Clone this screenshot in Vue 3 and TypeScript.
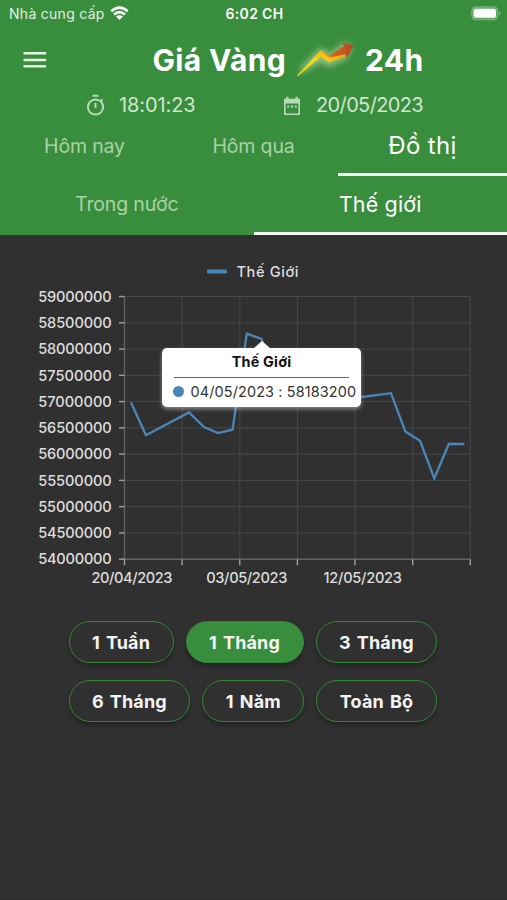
<script setup lang="ts">
import { ref } from 'vue'

interface Point { x: number; y: number }

const dayTab = ref(2)
const marketTab = ref(1)
const range = ref('1 Tháng')

const dayTabs = ['Hôm nay', 'Hôm qua', 'Đồ thị']
const marketTabs = ['Trong nước', 'Thế giới']
const rangeRows: string[][] = [
  ['1 Tuần', '1 Tháng', '3 Tháng'],
  ['6 Tháng', '1 Năm', 'Toàn Bộ'],
]

const left = 124.5
const right = 470.3
const top = 61.5
const bottom = 324.2
const yTicks = Array.from({ length: 11 }, (_, i) => ({
  label: String(59000000 - i * 500000),
  y: top + (i * (bottom - top)) / 10,
}))
const xTicks = Array.from({ length: 7 }, (_, i) => left + (i * (right - left)) / 6)
const xLabels = [
  { text: '20/04/2023', x: 91.5, w: 81 },
  { text: '03/05/2023', x: 206.3, w: 81 },
  { text: '12/05/2023', x: 323.5, w: 78.5 },
]

const points: Point[] = [
  { x: 131, y: 167.5 }, { x: 146, y: 200.2 }, { x: 189, y: 177.5 }, { x: 204, y: 192 },
  { x: 218, y: 198 }, { x: 232.5, y: 194.7 }, { x: 246.8, y: 98.6 }, { x: 261.5, y: 104 },
  { x: 275, y: 145 }, { x: 347, y: 164 }, { x: 391, y: 158.2 }, { x: 405.3, y: 196.5 },
  { x: 420, y: 205.8 }, { x: 434.3, y: 243.5 }, { x: 448.8, y: 209 }, { x: 464.3, y: 209 },
]
const linePoints = points.map((p) => `${p.x},${p.y}`).join(' ')
</script>

<template>
  <div class="screen">
    <header class="top">
      <div class="status">
        <div class="carrier">
          <span>Nhà cung cấp</span>
          <svg class="wifi" width="19" height="15" viewBox="0 0 19 15">
            <path d="M1.3 5.3Q9.5-1.9 17.7 5.3" />
            <path d="M4 8.4Q9.5 3.7 15 8.4" />
            <path class="solid" d="M9.5 14 6 10.5Q9.5 7.8 13 10.5Z" />
          </svg>
        </div>
        <span class="clock">6:02 CH</span>
        <div class="battery-wrap">
          <svg width="31" height="15" viewBox="0 0 31 15">
            <rect x=".8" y=".8" width="26" height="13" rx="4" fill="#64a666" stroke="#7db87f" />
            <rect x="2.6" y="2.8" width="22.4" height="9" rx="2" fill="#fff" />
            <path d="M28.3 5q2.3 2.4 0 4.8z" fill="#8bc08d" />
          </svg>
        </div>
      </div>

      <div class="title-row">
        <svg class="menu" width="24" height="18" viewBox="0 0 24 18">
          <path d="M.5 2.3h22.6M.5 8.9h22.6M.5 15.2h22.6" />
        </svg>
        <h1>Giá Vàng</h1>
        <svg class="arrow" width="68" height="48" viewBox="0 0 68 48">
          <defs>
            <linearGradient id="gold" x1="0" x2="1" y1="1" y2="0">
              <stop offset="0" stop-color="#d9dc16" />
              <stop offset=".5" stop-color="#fbd80c" />
              <stop offset="1" stop-color="#e99a16" />
            </linearGradient>
            <linearGradient id="rust" x1="0" x2="1">
              <stop offset="0" stop-color="#e0901b" />
              <stop offset=".45" stop-color="#c9641f" />
              <stop offset="1" stop-color="#b8481f" />
            </linearGradient>
            <filter id="glow" x="-30%" y="-30%" width="160%" height="160%">
              <feGaussianBlur stdDeviation="3" />
            </filter>
          </defs>
          <path d="M10 36 30 16 40 22 54 10 58 14 53 22 38 29 29 24Z" fill="#d9e8bf" stroke="#d9e8bf" stroke-width="5" opacity=".58" filter="url(#glow)" />
          <path d="M38 20.5 53 11.2 51.5 7.6 62.5 10.2 56.2 23 54.4 19.3 39.5 24.3 29.5 18 30 15.5Z" fill="url(#rust)" />
          <path d="M6 40.5 29.5 15.5 39 22.5 54 19.2 54 21.8 38 27.5 30 21.5 7 41.3Z" fill="url(#gold)" />
        </svg>
        <h1 class="hours">24h</h1>
      </div>

      <div class="info-row">
        <svg class="timer" width="20" height="22" viewBox="0 0 20 22">
          <circle cx="9.5" cy="13" r="7.6" />
          <path d="M6.5 1.8h6M9.5 9v5M14.8 7.2l1.8-1.8" />
        </svg>
        <span class="time">18:01:23</span>
        <svg class="calendar" width="18" height="20" viewBox="0 0 18 20">
          <path d="M1.8 3.6h14.4v14.6H1.8z" />
          <path class="fill" d="M1 3h16v4.6H1zM3.3.8h2.2v3H3.3zM12.5.8h2.2v3h-2.2z" />
          <path class="fill" d="M4.2 9.4h2v2h-2zM8 9.4h2v2H8zM11.8 9.4h2v2h-2z" />
        </svg>
        <span class="date">20/05/2023</span>
      </div>

      <nav class="tabs days">
        <button v-for="(t, i) in dayTabs" :key="t" :class="{ active: dayTab === i }" @click="dayTab = i">{{ t }}</button>
      </nav>
      <nav class="tabs markets">
        <button v-for="(t, i) in marketTabs" :key="t" :class="{ active: marketTab === i }" @click="marketTab = i">{{ t }}</button>
      </nav>
    </header>

    <main>
      <section class="chart">
        <svg width="507" height="365" viewBox="0 0 507 365">
          <rect x="207" y="34.6" width="20" height="4" rx="1" fill="#4a86b8" />
          <text class="label" x="236.5" y="41.8" textLength="62">Thế Giới</text>

          <g class="grid">
            <line v-for="t in yTicks" :key="t.y" :x1="left" :x2="right" :y1="t.y" :y2="t.y" />
            <line v-for="x in xTicks" :key="x" :x1="x" :x2="x" :y1="top" :y2="bottom" />
          </g>
          <g class="axis">
            <line :x1="left" :x2="left" :y1="top" :y2="bottom" />
            <line :x1="left" :x2="right" :y1="bottom" :y2="bottom" />
          </g>
          <g class="ticks">
            <line v-for="t in yTicks" :key="t.y" :x1="119" :x2="left" :y1="t.y" :y2="t.y" />
            <line v-for="x in xTicks" :key="x" :x1="x" :x2="x" :y1="bottom" :y2="bottom + 6" />
          </g>
          <text v-for="t in yTicks" :key="t.label" class="label" x="38.2" :y="t.y + 5.2" textLength="73.5">{{ t.label }}</text>
          <text v-for="l in xLabels" :key="l.text" class="label" :x="l.x" y="347.6" :textLength="l.w">{{ l.text }}</text>
          <polyline class="series" :points="linePoints" />
        </svg>

        <div class="tooltip">
          <strong>Thế Giới</strong>
          <div class="entry">
            <i></i>
            <span>04/05/2023 : 58183200</span>
          </div>
        </div>
      </section>

      <section class="ranges">
        <div v-for="(row, r) in rangeRows" :key="r" class="range-row">
          <button v-for="b in row" :key="b" :class="{ on: range === b }" @click="range = b">{{ b }}</button>
        </div>
      </section>
    </main>
  </div>
</template>

<style>
body {
  background: #303030;
}
</style>

<style scoped>
.screen {
  width: 507px;
  height: 900px;
  overflow: hidden;
  box-sizing: border-box;
  background: #303030;
  border-bottom: 1px solid #2d282c;
  color: #fff;
  font-family: Inter, Roboto, sans-serif;
}
button {
  font-family: inherit;
  color: inherit;
  background: none;
  border: 0;
  padding: 0;
  white-space: nowrap;
}
.top {
  height: 234.5px;
  background: #398e3d;
}
.status {
  height: 28px;
  display: grid;
  grid-template-columns: 1fr auto 1fr;
  align-items: center;
  padding: 0 7px 0 9px;
  font-size: 14px;
}
.status > * {
  min-width: 0;
}
.carrier {
  display: flex;
  align-items: center;
  gap: 5px;
  color: #e2f0e2;
  letter-spacing: 0.28px;
  margin-top: -1px;
}
.wifi {
  fill: none;
  stroke: #fff;
  stroke-width: 2.6;
  margin-top: -1px;
}
.wifi .solid {
  fill: #fff;
  stroke: none;
}
.clock {
  font-weight: 600;
  letter-spacing: 0.35px;
  margin-top: -1px;
}
.battery-wrap {
  display: flex;
  justify-content: flex-end;
  margin: -1px -2px 0 0;
}
.title-row {
  height: 64px;
  display: flex;
  align-items: center;
  padding-left: 23px;
}
.menu {
  stroke: #e6f5e4;
  stroke-width: 2.5;
  fill: none;
}
h1 {
  margin: 0 0 0 105.5px;
  width: 138.5px;
  font-size: 30px;
  line-height: 40px;
  font-weight: 700;
  letter-spacing: 0.35px;
  white-space: nowrap;
}
h1.hours {
  margin-left: 6px;
  width: auto;
}
.arrow {
  margin-top: -3px;
}
.info-row {
  height: 26px;
  display: flex;
  align-items: center;
  padding-left: 86px;
  font-size: 20px;
  color: #d0e6d0;
}
.timer {
  fill: none;
  stroke: #b9dbb9;
  stroke-width: 2;
}
.time {
  width: 164px;
  margin-left: 13px;
  letter-spacing: -0.1px;
}
.calendar {
  fill: none;
  stroke: #b9dbb9;
  stroke-width: 1.6;
  margin-top: 1px;
}
.calendar .fill {
  fill: #b9dbb9;
  stroke: none;
}
.date {
  margin-left: 15px;
  letter-spacing: -0.63px;
}
.tabs {
  display: flex;
}
.tabs button {
  flex: 1 1 0;
  box-sizing: border-box;
  border-bottom: 3px solid transparent;
  font-size: 19.5px;
  color: #a9d2a8;
  letter-spacing: -0.15px;
}
.tabs button.active {
  color: #fff;
  border-color: #f3f9f3;
}
.days {
  height: 58px;
}
.days button.active {
  font-size: 24px;
  letter-spacing: 0.35px;
}
.markets {
  height: 58.5px;
}
.markets button.active {
  font-size: 21.5px;
  letter-spacing: 0.15px;
}
.chart {
  position: relative;
  height: 365px;
}
.chart svg {
  display: block;
}
.label {
  font-size: 14.6px;
  font-weight: 450;
  fill: #dedede;
}
.grid {
  stroke: #45494b;
  stroke-width: 1;
}
.axis {
  stroke: #616161;
  stroke-width: 1.4;
}
.ticks {
  stroke: #a0a0a0;
  stroke-width: 1.4;
}
.series {
  fill: none;
  stroke: #4a86b8;
  stroke-width: 2.3;
}
.tooltip {
  position: absolute;
  left: 161.5px;
  top: 113.5px;
  width: 199.5px;
  height: 58.5px;
  box-sizing: border-box;
  padding: 0 5px 0 11px;
  border-radius: 5px;
  background: #fff;
  color: #333;
  box-shadow: 0 2px 4px rgba(255, 255, 255, 0.45);
}
.tooltip::before {
  content: '';
  position: absolute;
  left: 91px;
  top: -7px;
  border: solid transparent;
  border-width: 0 9px 8px;
  border-bottom-color: #fff;
}
.tooltip strong {
  display: block;
  height: 28.5px;
  line-height: 28px;
  margin: 0 7px 0 1.5px;
  border-bottom: 1px solid #666;
  text-align: center;
  font-size: 14.4px;
  letter-spacing: 0.2px;
  font-weight: 700;
  color: #111;
}
.entry {
  display: flex;
  align-items: center;
  height: 28px;
  gap: 7px;
  font-size: 14.4px;
  letter-spacing: 0.15px;
  white-space: nowrap;
}
.entry i {
  flex: none;
  width: 11px;
  height: 11px;
  border-radius: 50%;
  background: #4a86b8;
}
.ranges {
  padding: 21.5px 0 0 68.5px;
  display: flex;
  flex-direction: column;
  gap: 17px;
}
.range-row {
  display: flex;
  gap: 12px;
}
.range-row button {
  height: 42px;
  padding: 0 22.5px;
  box-sizing: border-box;
  border: 1.5px solid #35843a;
  border-radius: 21px;
  background: #303030;
  box-shadow: 0 3px 4px rgba(0, 0, 0, 0.28);
  color: #f4f4f4;
  font-size: 18px;
  font-weight: 700;
  word-spacing: 1.6px;
  letter-spacing: 0.15px;
}
.range-row button.on {
  background: #398e3d;
}
</style>
